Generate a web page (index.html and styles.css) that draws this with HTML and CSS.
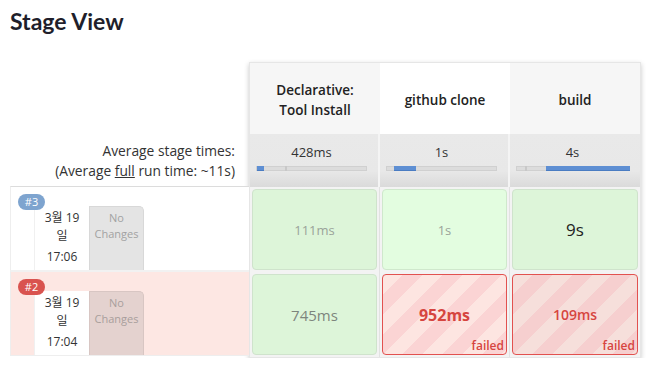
FILE: index.html
```html
<!DOCTYPE html>
<html lang="ko">
<head>
<meta charset="utf-8">
<title>Stage View</title>
<link rel="stylesheet" href="styles.css">
</head>
<body>
<h2 class="title">Stage View</h2>
<div class="stage-view">
  <div class="row-heads">
    <div class="head-spacer"></div>
    <div class="avg-label">
      <div>Average stage times:</div>
      <div>(Average <u>full</u> run time: ~11s)</div>
    </div>
    <div class="build">
      <span class="badge badge-blue">#3</span>
      <div class="date">
        <div class="day">3월 19<br>일</div>
        <div class="time">17:06</div>
      </div>
      <div class="changes">No<br>Changes</div>
    </div>
    <div class="build build-failed">
      <span class="badge badge-red">#2</span>
      <div class="date">
        <div class="day">3월 19<br>일</div>
        <div class="time">17:04</div>
      </div>
      <div class="changes">No<br>Changes</div>
    </div>
  </div>
  <div class="stages">
    <div class="stage-head">Declarative:<br>Tool Install</div>
    <div class="stage-head stage-head-alt">github clone</div>
    <div class="stage-head">build</div>

    <div class="avg">
      <div class="avg-time">428ms</div>
      <div class="bar"><span class="mark" style="left:28px"></span><span class="fill" style="left:0;width:7px"></span></div>
    </div>
    <div class="avg">
      <div class="avg-time">1s</div>
      <div class="bar"><span class="fill" style="left:7px;width:22px"></span></div>
    </div>
    <div class="avg">
      <div class="avg-time">4s</div>
      <div class="bar"><span class="mark" style="left:8px"></span><span class="fill" style="left:29px;width:84px"></span></div>
    </div>

    <div class="cell-wrap"><div class="cell ok"><span class="dur dur-small">111ms</span></div></div>
    <div class="cell-wrap"><div class="cell ok ok-hover"><span class="dur dur-small">1s</span></div></div>
    <div class="cell-wrap"><div class="cell ok"><span class="dur dur-big">9s</span></div></div>

    <div class="cell-wrap"><div class="cell ok"><span class="dur dur-mid">745ms</span></div></div>
    <div class="cell-wrap"><div class="cell failed"><span class="dur dur-fail-big">952ms</span><span class="failed-label">failed</span></div></div>
    <div class="cell-wrap"><div class="cell failed failed-alt"><span class="dur dur-fail-mid">109ms</span><span class="failed-label">failed</span></div></div>
  </div>
</div>
</body>
</html>
```

FILE: styles.css
```css
* { box-sizing: border-box; }

body {
  margin: 0;
  background: #fff;
  color: #333;
  font-family: "Open Sans", "Noto Sans CJK KR", sans-serif;
  font-size: 12px;
}

.title {
  margin: 0;
  padding: 6px 0 0 10px;
  height: 62px;
  font-family: Lato, "Noto Sans", sans-serif;
  font-size: 23px;
  font-weight: 700;
  color: #1f1f2b;
  line-height: 30px;
}

.stage-view {
  display: flex;
  margin-left: 10px;
}

.row-heads {
  width: 239px;
  display: flex;
  flex-direction: column;
}

.head-spacer { height: 71px; }

.avg-label {
  height: 53px;
  padding: 8px 14px 0 0;
  text-align: right;
  line-height: 20px;
  color: #333;
  font-size: 13.8px;
}

.build {
  position: relative;
  display: flex;
  height: 84px;
  padding: 19px 0 0 23px;
  border-top: 1px solid #dcdcdc;
  border-left: 1px solid #eeeeee;
  background: #fff;
}

.build-failed {
  height: 86px;
  padding-top: 19px;
  border-top: 2px solid #f1f1f1;
  border-bottom: 1px solid #eeeeee;
  background: #fde7e3;
}

.badge {
  position: absolute;
  left: 7px;
  top: 7px;
  min-width: 27px;
  height: 16px;
  padding: 0 5px;
  border-radius: 8px;
  color: #fff;
  font-size: 11px;
  line-height: 16px;
  text-align: center;
}

.badge-blue { background: #7ea4cf; }
.badge-red { background: #d9534f; }

.date {
  width: 55px;
  background: #fff;
  border-left: 1px solid #f0f0f0;
  text-align: center;
  color: #333;
  font-size: 12px;
}

.day {
  padding-top: 3px;
  line-height: 18px;
}

.time {
  margin-top: 3px;
  line-height: 18px;
}

.changes {
  width: 55px;
  background: #e4e4e4;
  border: 1px solid #d8d8d8;
  border-bottom: none;
  border-radius: 0 5px 0 0;
  color: #a2a2a2;
  text-align: center;
  font-size: 11px;
  line-height: 16px;
  padding-top: 3px;
}

.build-failed .changes {
  background: #e4d2cf;
  border-color: #d8c6c3;
  color: #a89e9c;
}

.stages {
  display: grid;
  grid-template-columns: 130px 130px 130px;
  grid-template-rows: 71px 53px 85px 85px;
  width: 392px;
  border: 1px solid #e6e6e6;
  box-shadow: 0 2px 5px rgba(0, 0, 0, 0.22);
  background: #fff;
  align-self: flex-start;
}

.stage-head {
  display: flex;
  align-items: center;
  justify-content: center;
  text-align: center;
  background: #f6f6f6;
  font-weight: 600;
  font-size: 13.5px;
  line-height: 20px;
  color: #222;
  padding-top: 2px;
}

.stage-head-alt { background: #fff; }

.avg {
  position: relative;
  background: linear-gradient(#e9e9e9 0%, #e8e8e8 70%, #dadada 100%);
  border-right: 2px solid #f4f4f4;
  padding: 8px 11px 0 6px;
}

.avg:nth-child(6) { border-right: none; }

.avg-time {
  text-align: center;
  font-size: 13px;
  line-height: 20px;
  color: #333;
}

.bar {
  position: relative;
  margin-top: 4px;
  height: 5px;
  background: #dcdcdc;
  border: 1px solid #d0d0d0;
}

.bar .mark {
  position: absolute;
  top: -1px;
  width: 2px;
  height: 5px;
  background: #c8c8c8;
}

.bar .fill {
  position: absolute;
  top: -1px;
  height: 5px;
  background: #5e8fd3;
  border-bottom: 1px solid #4a7cc2;
}

.cell-wrap {
  padding: 2px;
  background: #f3f3f3;
  border-right: 1px solid #e2e2e2;
}

.cell-wrap:nth-child(3n) { border-right: none; }

.cell {
  position: relative;
  height: 100%;
  border: 1px solid #cfe3cc;
  border-radius: 4px;
  display: flex;
  align-items: center;
  justify-content: center;
}

.ok { background: #ddf5d9; }
.ok-hover { background: #e3fde0; border-color: #cfe8cc; }

.failed {
  border-color: #e2514f;
  background: repeating-linear-gradient(135deg, #fde5e1 0 14px, #fbd4d4 14px 28px);
}

.failed-alt {
  background: repeating-linear-gradient(135deg, #f6dfdb 0 14px, #f6cfcf 14px 28px);
}

.dur { color: #999; }
.dur-small { font-size: 13px; color: #9aa39a; }
.dur-big { font-size: 17px; color: #222; }
.dur-mid { font-size: 15px; color: #7d857d; }
.dur-fail-big { font-size: 16px; font-weight: 700; color: #d6453f; }
.dur-fail-mid { font-size: 14px; font-weight: 600; color: #d6453f; }

.failed-label {
  position: absolute;
  right: 2px;
  bottom: 1px;
  font-size: 12px;
  font-weight: 600;
  color: #d6453f;
  line-height: 14px;
}
```
